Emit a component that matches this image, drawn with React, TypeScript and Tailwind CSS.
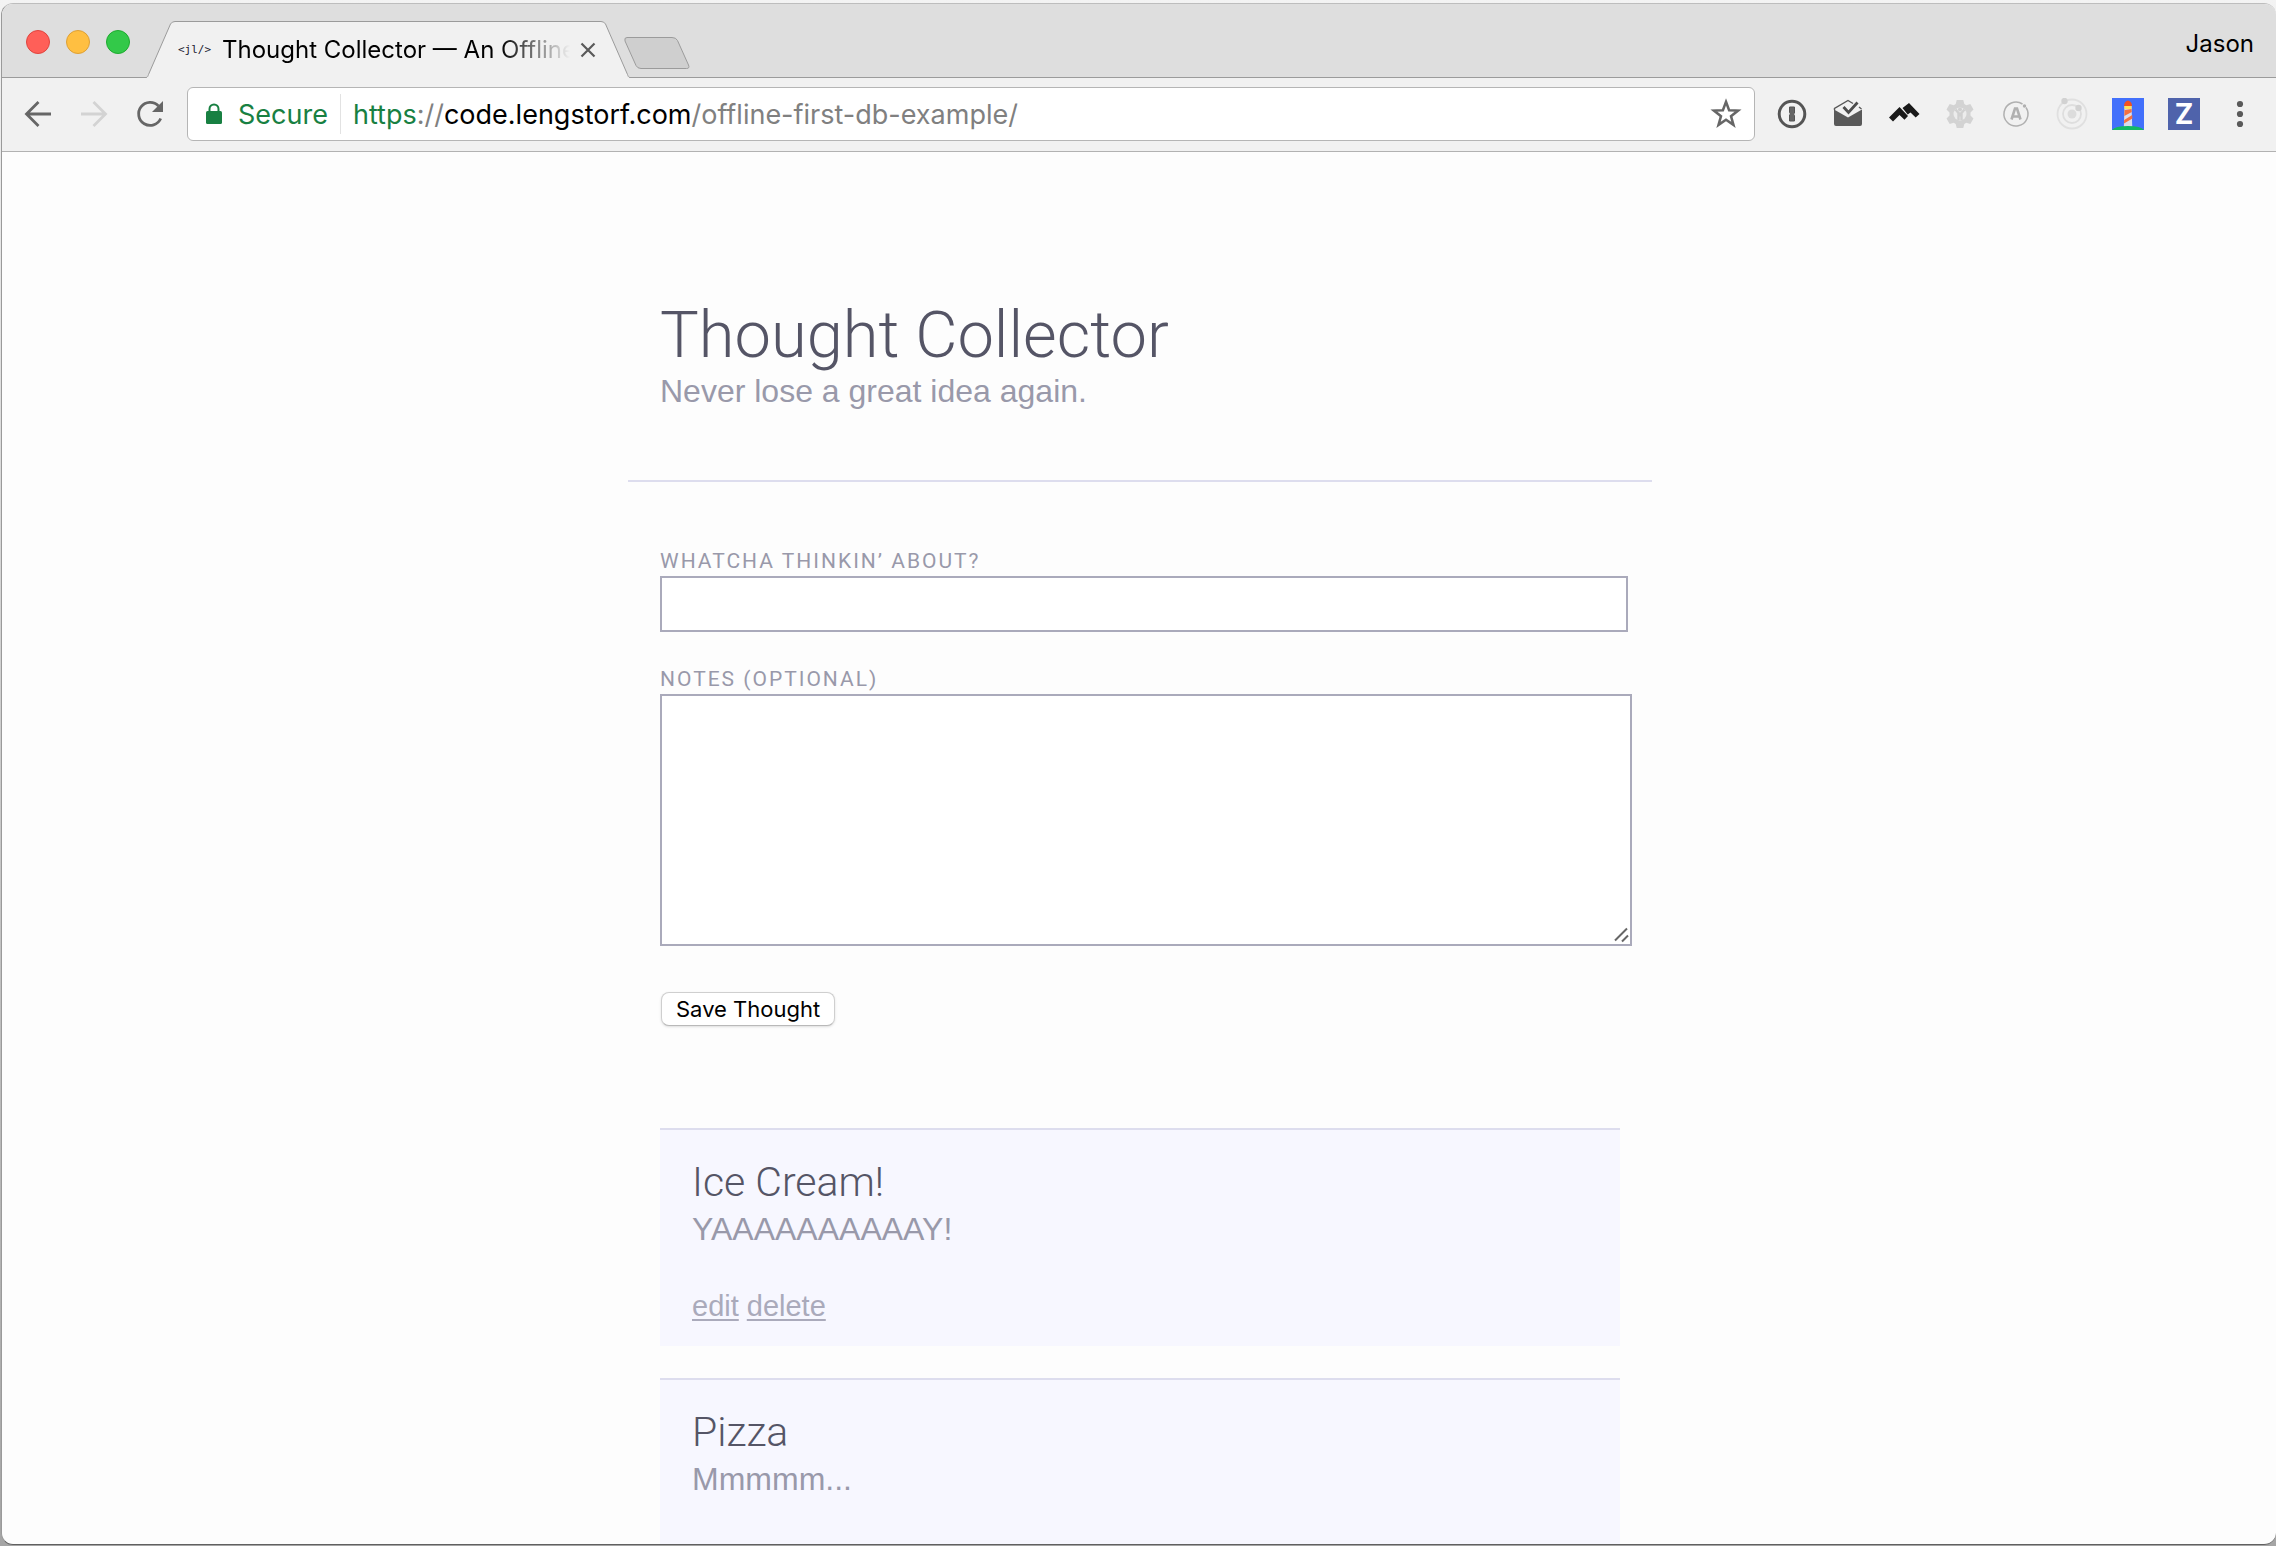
import type { ReactNode } from "react";

type Thought = { title: string; notes: string; editable: boolean };

const thoughts: Thought[] = [
  { title: "Ice Cream!", notes: "YAAAAAAAAAAY!", editable: true },
  { title: "Pizza", notes: "Mmmmm...", editable: false },
];

function TabStrip() {
  return (
    <header className="flex h-[74px] shrink-0 items-end border-b border-[#9b9b9b] bg-[#dedede]">
      <div className="flex h-full shrink-0 items-center gap-4 pt-0.5 pl-6">
        <button aria-label="Close window" className="size-6 rounded-full border border-[#e0443e] bg-[#ff5f58]" />
        <button aria-label="Minimize window" className="size-6 rounded-full border border-[#dea035] bg-[#ffbf41]" />
        <button aria-label="Zoom window" className="size-6 rounded-full border border-[#1eab2f] bg-[#33c949]" />
      </div>
      <div className="relative -mb-px ml-4 flex h-[57px] w-[484px] shrink-0 items-center pr-[34px] pl-8">
        <svg className="absolute inset-0 size-full" viewBox="0 0 484 57" aria-hidden="true">
          <path
            d="M0 57V56.500C1.500 56.500 2 55 2.500 53.500L24.500 3Q26 .5 29 .5H455Q458 .5 459.500 3L481.500 53.500C482 55 482.500 56.500 484 56.500V57Z"
            fill="#f1f1f1"
          />
          <path
            d="M0 56.500C1.500 56.500 2 55 2.500 53.500L24.500 3Q26 .5 29 .5H455Q458 .5 459.500 3L481.500 53.500C482 55 482.500 56.500 484 56.500"
            fill="none"
            stroke="#9b9b9b"
          />
        </svg>
        <span className="relative w-11 shrink-0 font-['DejaVu_Sans_Mono',monospace] text-[11px] leading-none text-[#223]">
          &lt;jl/&gt;
        </span>
        <span className="relative min-w-0 flex-1 overflow-hidden mask-r-from-80% mask-r-to-100% text-[24px] leading-8 whitespace-nowrap text-black">
          Thought Collector — An Offline
        </span>
        <button aria-label="Close tab" className="relative ml-2.5 shrink-0">
          <svg className="size-4" viewBox="0 0 16 16" fill="none" stroke="#5a5a5a" strokeWidth="2.200">
            <path d="M1.500 1.500l13 13M14.500 1.500l-13 13" />
          </svg>
        </button>
      </div>
      <button aria-label="New tab" className="-ml-1.5 mb-2 shrink-0">
        <svg className="h-8 w-[66px]" viewBox="0 0 66 32">
          <path
            d="M3 .5H48Q52 .5 53.500 3.500L64.500 28Q66 31.500 62.500 31.500H17Q13.500 31.500 12 28.500L1 4Q0 .5 3 .5Z"
            fill="#cfcfcf"
            stroke="#9b9b9b"
          />
        </svg>
      </button>
      <button className="mr-[22px] ml-auto self-center pt-1.5 text-[24px] leading-8 text-black">Jason</button>
    </header>
  );
}

function Tool({ label, children }: { label: string; children: ReactNode }) {
  return (
    <button aria-label={label} className="flex size-8 shrink-0 items-center justify-center">
      <svg className="size-8" viewBox="0 0 32 32" fill="none">
        {children}
      </svg>
    </button>
  );
}

function Toolbar() {
  return (
    <nav className="flex h-[74px] shrink-0 items-center border-b border-[#b2b2b2] bg-[#f1f1f1] pb-px">
      <div className="flex shrink-0 gap-6 pl-5">
        <Tool label="Back">
          <path d="M29 16H5M16.500 4L4.500 16l12 12" stroke="#666" strokeWidth="2.800" />
        </Tool>
        <Tool label="Forward">
          <path d="M3 16h24M15.500 4l12 12-12 12" stroke="#d3d3d3" strokeWidth="2.800" />
        </Tool>
        <Tool label="Reload">
          <path d="M26.700 20.500A11.500 11.500 0 1 1 24.500 8" stroke="#666" strokeWidth="2.800" />
          <path d="M29 3v11H18z" fill="#666" />
        </Tool>
      </div>
      <div className="ml-[21px] flex h-[54px] min-w-0 flex-1 items-center rounded-md border border-[#b5b5b5] bg-white pr-3 pl-[18px]">
        <svg className="h-[22px] w-4 shrink-0" viewBox="0 0 16 22" aria-hidden="true">
          <path d="M3.500 9V6a4.500 4.500 0 0 1 9 0v3" fill="none" stroke="#188042" strokeWidth="2" />
          <rect y="8" width="16" height="13" rx="1.500" fill="#188042" />
        </svg>
        <span className="ml-4 shrink-0 pt-0.5 text-[27px] leading-9 text-[#188042]">Secure</span>
        <span className="mx-3 h-10 w-px shrink-0 bg-[#e2e2e2]" />
        <span className="min-w-0 flex-1 truncate pt-0.5 text-[27px] leading-9 text-[#808080]">
          <span className="text-[#188042]">https</span>://<span className="text-black">code.lengstorf.com</span>
          /offline-first-db-example/
        </span>
        <Tool label="Bookmark this page">
          <path
            d="M16 3.800l3.100 8.500 9 .3-7.100 5.600 2.500 8.700-7.500-5.100-7.500 5.100 2.500-8.700-7.100-5.600 9-.3z"
            stroke="#666"
            strokeWidth="2.500"
          />
        </Tool>
      </div>
      <div className="flex shrink-0 gap-6 pr-5 pl-[21px]">
        <Tool label="1Password">
          <circle cx="16" cy="16" r="12.800" stroke="#555" strokeWidth="3" />
          <path d="M13.500 9h5v6l-1 1 1 1.500V23h-5v-6l1-1-1-1.500z" fill="#666" stroke="#555" />
        </Tool>
        <Tool label="Inbox">
          <path d="M2 11.500L16 19.500 30 11.500V26q0 2-2 2H4q-2 0-2-2z" fill="#595959" />
          <path d="M2.500 12L2.500 10.500 16 2.500l5 3M27 9l2.500 2" stroke="#595959" strokeWidth="1.400" />
          <path d="M11.500 9l5 5.500L25.500 4.500" stroke="#4c4c4c" strokeWidth="2.800" />
        </Tool>
        <Tool label="Mountain">
          <path d="M1 19.500L11.500 9l8.500 9-3.500 3.800L11.500 17l-6.500 6.500z" fill="#1a1a1a" />
          <path d="M14.500 10L21 5l10.500 11-3.800 3.500L22.500 14.500l-2.800 2z" fill="#1a1a1a" />
        </Tool>
        <Tool label="Accessibility tools">
          <path
            d="M12.700 2h6.600l1 4 2 1.200 4-1.200 3.200 5.600-3 2.900v3l3 2.900-3.200 5.600-4-1.200-2 1.200-1 4h-6.600l-1-4-2-1.200-4 1.200L2.500 20.400l3-2.900v-3l-3-2.900L5.700 6l4 1.200 2-1.200z"
            fill="#d3d3d3"
          />
          <circle cx="16" cy="16" r="6.500" fill="#ececec" />
          <circle cx="16" cy="11.500" r="2" fill="#d0d0d0" />
          <path d="M11.500 11.500l3 3.500v7M20.500 11.500l-3 3.500v7M16 14.500v4" stroke="#d0d0d0" strokeWidth="2.400" />
        </Tool>
        <Tool label="Apollo">
          <path d="M26 9.500A12 12 0 1 1 22.500 6" stroke="#b0b0b0" strokeWidth="1.500" />
          <circle cx="24.500" cy="8" r="1.700" fill="#b0b0b0" />
          <path d="M11.500 21.500L15 10.500h2l3.500 11M13 18.500h6" stroke="#b0b0b0" strokeWidth="2.600" />
        </Tool>
        <Tool label="Orbit">
          <circle cx="16" cy="16" r="14.500" stroke="#e0e0e0" strokeWidth="1.800" />
          <circle cx="16" cy="16" r="9" stroke="#dedede" strokeWidth="1.800" />
          <circle cx="16" cy="16" r="4.500" fill="#dcdcdc" />
          <circle cx="8.500" cy="3" r="3.200" fill="#d2d2d2" />
          <circle cx="22.500" cy="10" r="3.200" fill="#d2d2d2" />
        </Tool>
        <Tool label="Lighthouse">
          <path d="M0 0h32v32H0z" fill="#4270fb" />
          <path d="M12.500 8h7l.8 22h-8.500z" fill="#d9dcec" />
          <path d="M12 8Q12 3.500 16 2.500q4 1 4 5.500z" fill="#f4511e" />
          <path d="M12.500 8h7v3h-7z" fill="#fde25a" />
          <path d="M12.500 12l7-1 .3 3-7.500 4zM12.200 22l8-5 .2 3.500-8.400 5z" fill="#f4713f" />
          <path d="M0 32q3-4 16-4t16 4z" fill="#12b866" />
        </Tool>
        <button
          aria-label="Zotero"
          className="flex size-8 shrink-0 items-center justify-center bg-[#4f63ab] text-[28px] leading-none font-bold text-white"
        >
          Z
        </button>
        <Tool label="Menu">
          <circle cx="16" cy="6" r="3.100" fill="#5a5a5a" />
          <circle cx="16" cy="16" r="3.100" fill="#5a5a5a" />
          <circle cx="16" cy="26" r="3.100" fill="#5a5a5a" />
        </Tool>
      </div>
    </nav>
  );
}

function ThoughtCard({ title, notes, editable }: Thought) {
  return (
    <article className="min-h-[218px] border-t-2 border-[#dde] bg-[#f7f7ff] px-8 pt-7 pb-5">
      <h2 className="font-['Roboto',sans-serif] text-[41px] leading-[48px] font-light text-[#556]">{title}</h2>
      <p className="text-[32px] leading-[46px] text-[#99a]">{notes}</p>
      {editable && (
        <p className="mt-[34px] flex gap-2 text-[29px] leading-10 text-[#aab]">
          <a href="#edit" className="underline decoration-2 underline-offset-3">
            edit
          </a>
          <a href="#delete" className="underline decoration-2 underline-offset-3">
            delete
          </a>
        </p>
      )}
    </article>
  );
}

export default function App() {
  return (
    <div className="h-screen bg-linear-to-b from-[#f3f3f3] to-[#a5a5a5] pt-[3px] pb-px pl-px font-['Inter',sans-serif]">
      <div className="flex h-full flex-col overflow-hidden rounded-xl border border-r-0 border-t-[#bdbdbd] border-b-[#606060] border-l-[#9a9a9a] bg-[#fdfdfd]">
        <TabStrip />
        <Toolbar />
        <main className="min-h-0 flex-1 overflow-hidden pl-0.5 font-['Liberation_Sans',Arial,sans-serif]">
          <div className="mx-auto max-w-[1024px]">
            <div className="border-b-2 border-[#dde] px-8 pt-[146px] pb-[70px]">
              <h1 className="font-['Roboto',sans-serif] text-[65px] leading-[74px] font-light text-[#556]">
                Thought Collector
              </h1>
              <p className="text-[32px] leading-[38px] text-[#99a]">Never lose a great idea again.</p>
            </div>
            <form className="flex flex-col items-start px-8 pt-16" onSubmit={(event) => event.preventDefault()}>
              <label
                htmlFor="thought"
                className="font-['Roboto',sans-serif] text-[21px] leading-[30px] tracking-[2px] text-[#99a] uppercase"
              >
                Whatcha thinkin’ about?
              </label>
              <input
                id="thought"
                type="text"
                className="h-14 w-[calc(100%+8px)] border-2 border-[#aab] bg-white px-3 text-[28px] text-[#556]"
              />
              <label
                htmlFor="notes"
                className="mt-8 font-['Roboto',sans-serif] text-[21px] leading-[30px] tracking-[2px] text-[#99a] uppercase"
              >
                Notes (optional)
              </label>
              <div className="relative w-[calc(100%+12px)]">
                <textarea
                  id="notes"
                  className="block h-[252px] w-full resize-none border-2 border-[#aab] bg-white px-3 py-2 text-[28px] text-[#556]"
                />
                <svg
                  className="pointer-events-none absolute right-[3px] bottom-[3px] size-4"
                  viewBox="0 0 16 16"
                  stroke="#666"
                  strokeWidth="2"
                  aria-hidden="true"
                >
                  <path d="M2 13.500L14 1.500M9 14.500l6-6" />
                </svg>
              </div>
              <button
                type="submit"
                className="mt-[46px] ml-px h-[34px] rounded-lg border border-[#cfcfcf] border-b-[#b9b9b9] bg-white px-[14px] font-['Inter',sans-serif] text-[22px] leading-[32px] text-black shadow-sm"
              >
                Save Thought
              </button>
            </form>
            <section className="mt-[102px] flex flex-col gap-8 px-8" aria-label="Thoughts">
              {thoughts.map((thought) => (
                <ThoughtCard key={thought.title} {...thought} />
              ))}
            </section>
          </div>
        </main>
      </div>
    </div>
  );
}
